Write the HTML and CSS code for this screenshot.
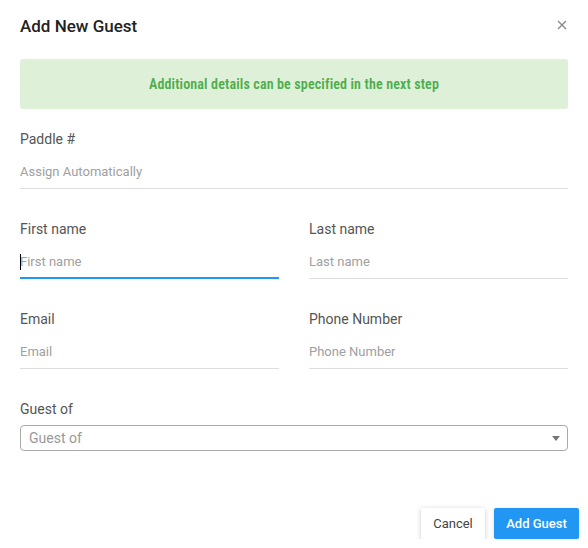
FILE: index.html
```html
<!DOCTYPE html>
<html lang="en">
<head>
<meta charset="utf-8">
<title>Add New Guest</title>
<link rel="stylesheet" href="styles.css">
</head>
<body>
<div class="dialog">
  <div class="header">
    <h1 class="title">Add New Guest</h1>
    <button class="close" aria-label="Close">
      <svg width="10" height="10" viewBox="0 0 10 10"><path d="M1 1 L9 9 M9 1 L1 9" stroke="#8a8a8a" stroke-width="1.4" fill="none"/></svg>
    </button>
  </div>
  <div class="notice">Additional details can be specified in the next step</div>
  <div class="field">
    <label class="label">Paddle #</label>
    <input class="input" type="text" placeholder="Assign Automatically">
  </div>
  <div class="row">
    <div class="field">
      <label class="label">First name</label>
      <div class="focus-wrap"><input class="input focused" type="text" placeholder="First name"></div>
    </div>
    <div class="field">
      <label class="label">Last name</label>
      <input class="input" type="text" placeholder="Last name">
    </div>
  </div>
  <div class="row">
    <div class="field">
      <label class="label">Email</label>
      <input class="input" type="text" placeholder="Email">
    </div>
    <div class="field">
      <label class="label">Phone Number</label>
      <input class="input" type="text" placeholder="Phone Number">
    </div>
  </div>
  <div class="field">
    <label class="label">Guest of</label>
    <div class="select">
      <span class="select-text">Guest of</span>
      <span class="arrow"></span>
    </div>
  </div>
  <div class="footer">
    <button class="btn btn-cancel">Cancel</button>
    <button class="btn btn-primary">Add Guest</button>
  </div>
</div>
</body>
</html>
```
FILE: styles.css
```css
* { box-sizing: border-box; }
html, body {
  margin: 0;
  padding: 0;
  background: #fff;
  font-family: Roboto, "Liberation Sans", sans-serif;
}
.dialog {
  width: 588px;
  padding: 16px 0 0 20px;
}
.header {
  display: flex;
  align-items: center;
  justify-content: space-between;
  height: 20px;
  padding-right: 20px;
}
.title {
  margin: 0;
  font-size: 17px;
  line-height: 20px;
  font-weight: 500;
  color: #222;
}
.close {
  border: 0;
  background: none;
  padding: 0;
  width: 10px;
  height: 10px;
  display: flex;
  margin-right: 1px;
  margin-top: -2px;
}
.notice {
  margin-top: 23px;
  width: 548px;
  height: 50px;
  background: #dff0d8;
  border-radius: 3px;
  display: flex;
  align-items: center;
  justify-content: center;
  color: #4cae4c;
  font-size: 14px;
  font-weight: 600;
  font-stretch: 87.5%;
  letter-spacing: 0.15px;
}
.field {
  display: flex;
  flex-direction: column;
  width: 548px;
  margin-top: 20px;
}
.row {
  display: flex;
  gap: 30px;
  width: 548px;
  margin-top: 30px;
}
.row .field {
  width: 259px;
  margin-top: 0;
}
.row + .field { margin-top: 30px; }
.label {
  font-size: 14px;
  line-height: 20px;
  color: #555;
}
.input {
  margin-top: 6px;
  height: 34px;
  width: 100%;
  border: 0;
  border-bottom: 1px solid #ddd;
  padding: 0;
  font-family: inherit;
  font-size: 13px;
  color: #333;
  outline: none;
  background: transparent;
}
.input::placeholder { color: #a0a0a0; }
.focus-wrap {
  position: relative;
  margin-top: 6px;
}
.focus-wrap .input { margin-top: 0; }
.input.focused { border-bottom: 2px solid #2196f3; }
.focus-wrap::before {
  content: "";
  position: absolute;
  left: 0;
  top: 9px;
  width: 1px;
  height: 16px;
  background: #000;
}
.select {
  margin-top: 6px;
  height: 26px;
  border: 1px solid #aaa;
  border-radius: 4px;
  display: flex;
  align-items: center;
  justify-content: space-between;
  padding: 0 7px 0 8px;
}
.select-text {
  font-size: 14px;
  color: #999;
}
.arrow {
  width: 0;
  height: 0;
  border-left: 4px solid transparent;
  border-right: 4px solid transparent;
  border-top: 5px solid #777;
  margin-top: 1px;
}
.footer {
  display: flex;
  justify-content: flex-end;
  gap: 9px;
  padding-right: 9px;
  margin-top: 57px;
}
.btn {
  height: 31px;
  border: 0;
  border-radius: 2px;
  font-family: inherit;
  font-size: 13px;
  cursor: pointer;
}
.btn-cancel {
  width: 64px;
  background: #fff;
  color: #444;
  box-shadow: 0 1px 5px rgba(0,0,0,0.22);
}
.btn-primary {
  width: 85px;
  background: #2196f3;
  color: #fff;
  font-weight: 500;
  box-shadow: 0 1px 4px rgba(0,0,0,0.15);
}
```
